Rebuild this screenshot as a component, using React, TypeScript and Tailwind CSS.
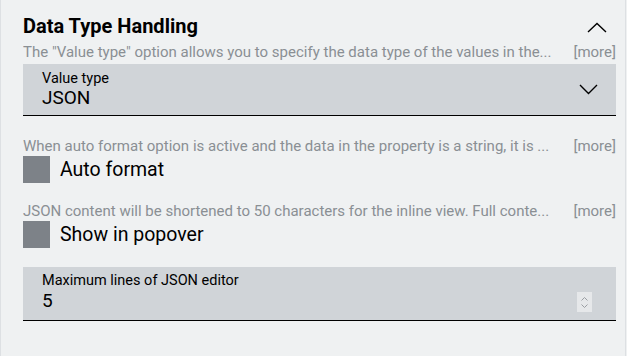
import React from 'react';

const ChevronUp = () => (
  <svg width="20" height="11" viewBox="0 0 20 11" fill="none" className="mr-[9px] mt-[3px]">
    <polyline points="1,10 10,1.5 19,10" stroke="#000" strokeWidth="1.4" />
  </svg>
);

const ChevronDown = () => (
  <svg width="19" height="11" viewBox="0 0 19 11" fill="none">
    <polyline points="1,1 9.5,9.5 18,1" stroke="#000" strokeWidth="1.4" />
  </svg>
);

const Description: React.FC<{ text: string; className?: string }> = ({ text, className }) => (
  <div className={`flex items-center justify-between h-[18px] text-[15px] leading-[18px] text-[#8a8f94] ${className ?? ''}`}>
    <span className="truncate pr-3">{text}</span>
    <span className="shrink-0">[more]</span>
  </div>
);

const Checkbox: React.FC<{ label: string }> = ({ label }) => (
  <div className="flex items-center h-[27px] mt-[1px]">
    <div className="w-[27px] h-[27px] bg-[#7d8288]" />
    <span className="ml-[10px] text-[19.5px] text-black">{label}</span>
  </div>
);

export default function App() {
  return (
    <div className="w-[627px] h-[356px] bg-[#eff1f2] font-['Roboto',sans-serif]">
      <div className="h-full w-[626px] border-x border-[#dde0e3] pl-[22px] pr-[9px] pt-[12px]">
        <div className="flex items-center justify-between h-[27px]">
          <h2 className="text-[20px] leading-[24px] font-bold text-black">Data Type Handling</h2>
          <ChevronUp />
        </div>

        <Description
          className="mt-[4px]"
          text={'The "Value type" option allows you to specify the data type of the values in the...'}
        />

        <div className="mt-[3px] h-[52px] bg-[#d0d4d8] border-b border-black flex items-center justify-between pl-[19px] pr-[18px]">
          <div className="flex flex-col mt-[1px]">
            <span className="text-[14.5px] leading-[16px] text-black">Value type</span>
            <span className="text-[19px] leading-[22px] text-black">JSON</span>
          </div>
          <ChevronDown />
        </div>

        <Description
          className="mt-[21px]"
          text="When auto format option is active and the data in the property is a string, it is ..."
        />
        <Checkbox label="Auto format" />

        <Description
          className="mt-[19px]"
          text="JSON content will be shortened to 50 characters for the inline view. Full conte..."
        />
        <Checkbox label="Show in popover" />

        <div className="mt-[19px] h-[54px] bg-[#d0d4d8] border-b border-black pl-[19px] pr-[24px] pt-[6px]">
          <div className="text-[14.5px] leading-[16px] text-black">Maximum lines of JSON editor</div>
          <div className="flex items-center justify-between mt-[1px]">
            <span className="text-[19px] leading-[22px] text-black">5</span>
            <div className="w-[15px] h-[20px] bg-[#e6e8ea] flex flex-col items-center justify-center gap-[3px] mt-[2px]">
              <svg width="7" height="4" viewBox="0 0 7 4" fill="none">
                <polyline points="0.5,3.5 3.5,0.5 6.5,3.5" stroke="#9a9ea3" strokeWidth="1" />
              </svg>
              <svg width="7" height="4" viewBox="0 0 7 4" fill="none">
                <polyline points="0.5,0.5 3.5,3.5 6.5,0.5" stroke="#9a9ea3" strokeWidth="1" />
              </svg>
            </div>
          </div>
        </div>
      </div>
    </div>
  );
}
